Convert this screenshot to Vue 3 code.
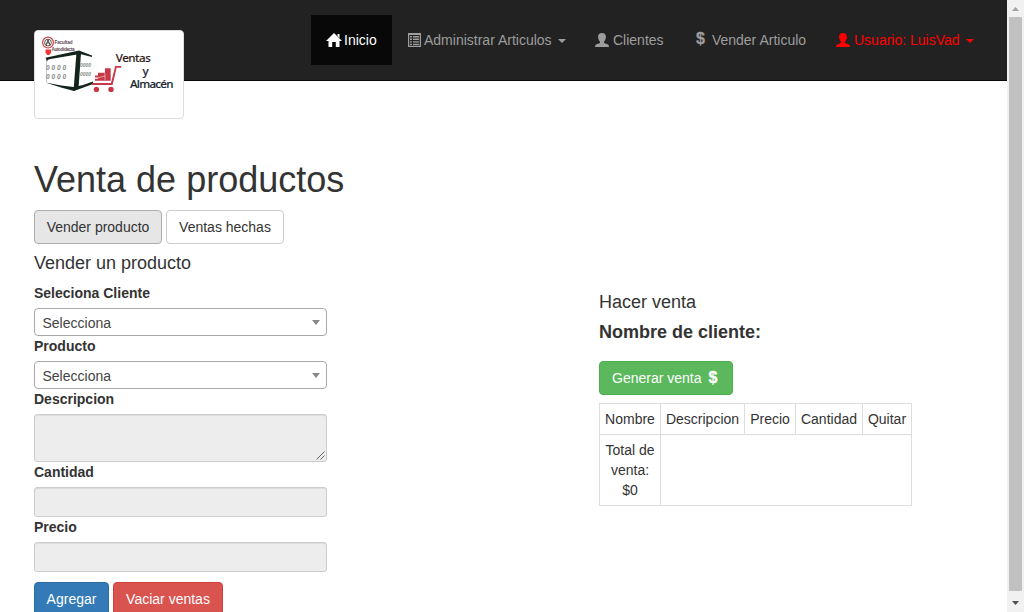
<script setup>
const columns = ['Nombre', 'Descripcion', 'Precio', 'Cantidad', 'Quitar']
</script>

<template>
  <div class="window">
    <main class="page">
      <nav class="navbar">
        <a class="brand">
          <svg width="140" height="79" viewBox="0 0 140 79">
            <g fill="#14241b">
              <path d="M6.5 22.7 40 15.6 53 20.6 53 22 41 19 10 24.2 8 26z" />
              <path d="M37.5 17 42 18 39.5 53.5 34.5 56z" />
              <path d="M6.5 47.5 22 50.5 35 52 44 50 54 46.5 54 49 35 56 22 52.5z" />
            </g>
            <path d="M7.6 25v22" stroke="#14241b" stroke-width=".6" opacity=".45" />
            <g class="windows">
              <text x="7" y="35.4" textLength="20">0 0 0 0</text>
              <text x="7" y="43.8" textLength="20">0 0 0 0</text>
              <text x="41" y="31.6" class="side" textLength="11">0 0 0 0</text>
              <text x="41" y="40.6" class="side" textLength="11">0 0 0 0</text>
            </g>
            <circle cx="9" cy="7.6" r="5.4" fill="#fff" stroke="#d3444a" stroke-width="1.2" />
            <circle cx="9" cy="7.6" r="3.4" fill="none" stroke="#554" stroke-width="1" />
            <path d="M7 10 9 5 11 10M8 8h2" fill="none" stroke="#333" stroke-width=".9" />
            <path d="M6.5 14.5h5.5v3L10.4 20H8.2l-1.7-2.5z" fill="#f03534" />
            <text x="15.5" y="9.4" class="tiny" textLength="18">Facultad</text>
            <text x="12.5" y="15.6" class="tiny" textLength="23">Autodidacta</text>
            <g fill="#c93848">
              <path d="M66 33.3h5.7v12.4H56v-2h3v-1.2h-3v-2h3v-2.8h7z" />
              <path d="M53 48h19l4.2-17h6v1.8h-4.6L73.6 50H53z" />
              <circle cx="57.4" cy="54.4" r="2.7" />
              <circle cx="72" cy="54.4" r="2.7" />
            </g>
            <path d="M59 42.8 66 41M66 38v7" stroke="#fff" stroke-width=".5" />
            <text x="76.8" y="27" class="logo-text warm" textLength="35">Ventas</text>
            <text x="103.5" y="40.3" class="logo-text">y</text>
            <text x="91" y="52.5" class="logo-text" textLength="43.5">Almacén</text>
          </svg>
        </a>
        <div class="links">
          <a class="link home active">
            <svg class="icon" width="16" height="14" viewBox="0 0 16 14"><path d="M8 0 16 8H13.5V14H9.8V9H6.2V14H2.5V8H0zM11.5 1h2v4l-2-2z" fill="currentColor" /></svg>
            <span>Inicio</span>
          </a>
          <a class="link admin">
            <svg class="icon" width="14" height="14" viewBox="0 0 14 14"><path d="M.6.6h11.8v12.8H.6z" fill="none" stroke="currentColor" stroke-width="1.2" /><path d="M0 0h13v2H0zM2 3h2v1.4H2zM5 3h6v1.4H5zM2 5.6h2V7H2zM5 5.6h6V7H5zM2 8.2h2v1.4H2zM5 8.2h6v1.4H5zM2 10.8h2v1.2H2zM5 10.8h6v1.2H5z" fill="currentColor" /></svg>
            <span>Administrar Articulos</span><i class="caret"></i>
          </a>
          <a class="link clients">
            <svg class="icon" width="14" height="14" viewBox="0 0 14 14"><path d="M7 0C9.7 0 10.9 1.5 10.9 3.8 10.9 5.8 10.2 7.5 9 8.7V10L13 11.5Q14 12 14 14H0Q0 12 1 11.5L5 10V8.7C3.8 7.5 3.1 5.8 3.1 3.8 3.1 1.5 4.3 0 7 0z" fill="currentColor" /></svg>
            <span>Clientes</span>
          </a>
          <a class="link sell"><b class="dollar">$</b><span>Vender Articulo</span></a>
          <a class="link user">
            <svg class="icon" width="14" height="14" viewBox="0 0 14 14"><path d="M7 0C9.7 0 10.9 1.5 10.9 3.8 10.9 5.8 10.2 7.5 9 8.7V10L13 11.5Q14 12 14 14H0Q0 12 1 11.5L5 10V8.7C3.8 7.5 3.1 5.8 3.1 3.8 3.1 1.5 4.3 0 7 0z" fill="currentColor" /></svg>
            <span>Usuario: LuisVad</span><i class="caret"></i>
          </a>
        </div>
      </nav>

      <section class="content">
        <h1>Venta de productos</h1>
        <div class="tabs">
          <button class="btn default pressed">Vender producto</button>
          <button class="btn default second">Ventas hechas</button>
        </div>
        <h4>Vender un producto</h4>
        <div class="columns">
          <form class="form">
            <label>Seleciona Cliente</label>
            <div class="select"><span>Selecciona</span><i></i></div>
            <label>Producto</label>
            <div class="select"><span>Selecciona</span><i></i></div>
            <label>Descripcion</label>
            <div class="field area">
              <svg width="9" height="9" viewBox="0 0 9 9"><path d="M.5 8.5l8-8M4.5 8.5l4-4" stroke="#555" stroke-width=".9" /></svg>
            </div>
            <label>Cantidad</label>
            <div class="field"></div>
            <label>Precio</label>
            <div class="field"></div>
            <div class="actions">
              <button type="button" class="btn primary">Agregar</button>
              <button type="button" class="btn danger">Vaciar ventas</button>
            </div>
          </form>
          <div class="sale">
            <h4>Hacer venta</h4>
            <h4 class="client">Nombre de cliente:</h4>
            <button class="btn success">Generar venta<b class="dollar">$</b></button>
            <table>
              <colgroup><col class="c1" /><col class="c2" /><col class="c3" /><col class="c4" /><col class="c5" /></colgroup>
              <tbody>
                <tr><td v-for="c in columns" :key="c">{{ c }}</td></tr>
                <tr class="total"><td>Total de venta: $0</td><td colspan="4"></td></tr>
              </tbody>
            </table>
          </div>
        </div>
      </section>
    </main>
    <aside class="scrollbar">
      <svg width="17" height="17" viewBox="0 0 17 17"><path d="M5 11h7L8.5 7z" fill="#a3a3a3" /></svg>
      <div class="thumb"></div>
      <svg width="17" height="21" viewBox="0 0 17 21"><path d="M5 10h7L8.5 14z" fill="#505050" /></svg>
    </aside>
  </div>
</template>

<style>
body { overflow: hidden; background: #fff; }
</style>

<style scoped>
* { box-sizing: border-box; }
.window {
  display: flex; width: 1024px; height: 612px; overflow: hidden;
  font: 14px/20px "Liberation Sans", Arial, sans-serif; color: #333;
}
.page { width: 1007px; height: 612px; overflow: hidden; }
.navbar {
  display: flex; height: 81px; padding-left: 34px;
  background: #222; border-bottom: 1px solid #080808;
}
.brand {
  width: 150px; height: 89px; margin-top: 30px; flex: none; padding: 4px;
  background: #fff; border: 1px solid #ddd; border-radius: 4px;
}
.brand svg { display: block; }
.windows text { font: italic bold 6.5px "Liberation Sans", sans-serif; fill: #858a86; }
.windows .side { font-size: 5px; }
.tiny { font: bold 4.6px "Liberation Sans", sans-serif; fill: #5f4a55; }
.logo-text { font: 500 11.6px "Noto Sans", sans-serif; fill: #1b2632; stroke: #1b2632; stroke-width: .15px; }
.warm { fill: #351f1e; stroke: #351f1e; }
.links { display: flex; margin: 15px 0 0 127px; height: 50px; }
.link { display: flex; align-items: center; height: 50px; padding-left: 15px; color: #9d9d9d; white-space: nowrap; }
.link .icon { flex: none; margin-top: -1px; }
.home { width: 81px; }
.home span { margin-left: 2px; }
.active { background: #080808; color: #fff; }
.admin { width: 188px; padding-left: 16px; }
.admin span { margin-left: 2px; }
.clients { width: 99px; }
.clients span, .user span { margin-left: 4px; }
.sell { width: 142px; padding-left: 17px; }
.sell span { margin-left: 7px; }
.user { color: #f00; }
.caret { margin: 2px 0 0 6px; border: 4px solid transparent; border-top-color: currentColor; border-bottom: 0; }
.dollar { font-size: 16px; line-height: 18px; -webkit-text-stroke: .3px currentColor; }
.sell .dollar { margin-top: -2px; }
.content { padding: 79px 0 0 34px; }
h1 { margin: 0; height: 50px; font-size: 36px; font-weight: 400; line-height: 39px; }
h4 { margin: 0; height: 30px; font-size: 18px; font-weight: 400; line-height: 20px; }
.tabs { display: flex; gap: 4px; margin-bottom: 9px; }
.btn {
  display: block; height: 34px; padding: 0; font: inherit; color: #fff;
  border: 1px solid; border-radius: 4px; white-space: nowrap; text-align: center;
}
.default { width: 128px; color: #333; background: #fff; border-color: #ccc; }
.pressed { background: #e6e6e6; border-color: #adadad; }
.second { width: 118px; }
.columns { display: flex; }
.form { width: 293px; }
label { display: block; height: 25px; font-weight: 700; }
.select {
  display: flex; align-items: center; justify-content: space-between; height: 28px;
  padding: 2px 6px 0 7.5px; border: 1px solid #aaa; border-radius: 4px; color: #444;
}
.select i { margin-top: -1px; border: 4px solid transparent; border-top: 5px solid #888; border-bottom: 0; }
.field {
  height: 30px; background: #ededed; border: 1px solid #ccc; border-radius: 3px;
  box-shadow: inset 0 1px 1px rgba(0, 0, 0, .075);
}
.area { display: flex; height: 48px; align-items: flex-end; justify-content: flex-end; padding: 0 1px 1px 0; }
.actions { display: flex; gap: 4px; margin-top: 10px; }
.primary { width: 75px; background: #337ab7; border-color: #2e6da4; }
.danger { width: 110px; background: #d9534f; border-color: #d43f3a; }
.sale { width: 314px; margin: 9px 0 0 272px; }
.client { height: 39px; font-weight: 700; }
.success {
  display: flex; align-items: center; width: 134px; padding-left: 12px;
  background: #5cb85c; border-color: #4cae4c;
}
.success .dollar { margin: -1px 0 0 7px; }
table { width: 313px; margin-top: 8px; table-layout: fixed; border-collapse: collapse; }
td { height: 31px; padding: 5px 0; border: 1px solid #ddd; text-align: center; vertical-align: top; line-height: 20px; }
.total td { padding: 5px; height: 71px; }
.c1 { width: 61px; }
.c2 { width: 84px; }
.c3 { width: 51px; }
.c4 { width: 67px; }
.c5 { width: 49px; }
.scrollbar { width: 17px; height: 612px; background: #f1f1f1; }
.scrollbar svg { display: block; }
.thumb { height: 574px; margin: 0 2px; background: #c1c1c1; }
</style>
